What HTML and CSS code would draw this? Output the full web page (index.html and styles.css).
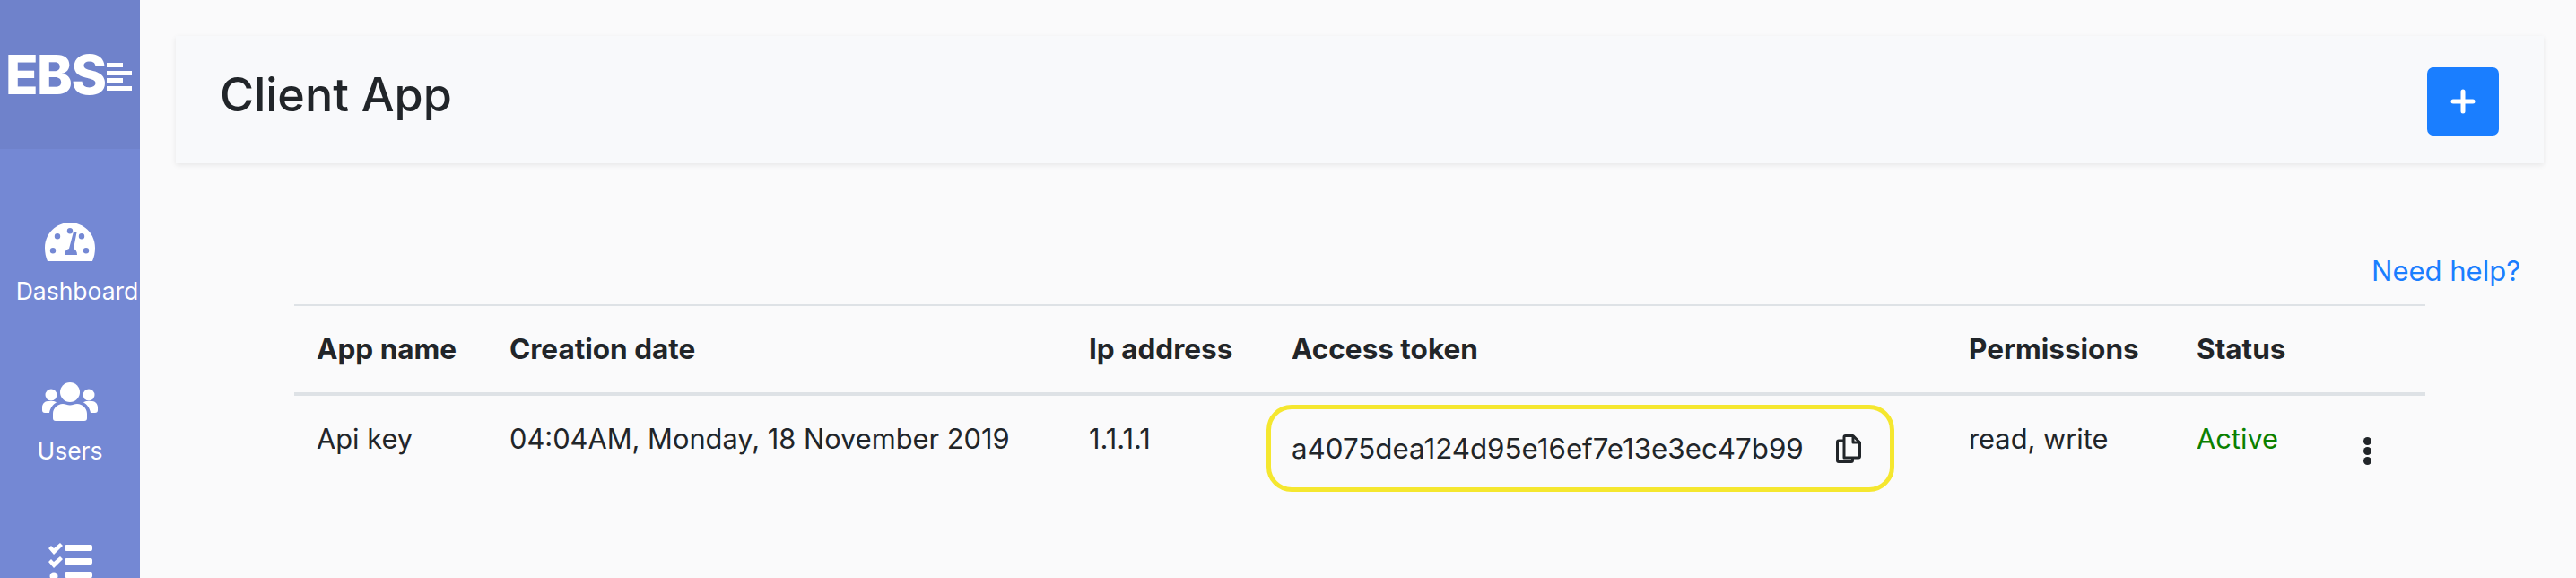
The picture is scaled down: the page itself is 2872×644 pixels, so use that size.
FILE: index.html
```html
<!DOCTYPE html>
<html lang="en">
<head>
  <meta charset="UTF-8" />
  <meta name="viewport" content="width=device-width, initial-scale=1" />
  <title>Client App</title>
  <link rel="stylesheet" href="styles.css">
</head>
<body>
  <div class="app">
    <aside class="sidebar">
      <div class="logo">
        <span class="logo-text">EBS</span>
        <span class="logo-lines"><i class="short"></i><i></i><i class="short"></i><i></i></span>
      </div>
      <nav class="nav">
        <a class="nav-item nav-dash">
          <svg class="icon-dash" viewBox="0 0 56 43">
            <path fill-rule="evenodd" fill="#fff" d="M28 0C12.5 0 0 12.5 0 28c0 5.500 1 10.500 3 15h50c2-4.500 3-9.500 3-15C56 12.500 43.500 0 28 0zM28 6a3.200 3.200 0 1 1 0 6.400 3.200 3.200 0 0 1 0-6.400zM14 12a3.200 3.200 0 1 1 0 6.400 3.200 3.200 0 0 1 0-6.400zM41 12a3.200 3.200 0 1 1 0 6.400 3.200 3.200 0 0 1 0-6.400zM9 28a3.200 3.200 0 1 1 0 6.400 3.200 3.200 0 0 1 0-6.400zM46 28a3.200 3.200 0 1 1 0 6.400 3.200 3.200 0 0 1 0-6.400zM32 10l3.500 1-3.500 18c2.500 1 4 3.500 4 7H22c0-3.500 1.500-6 5-7z"/>
          </svg>
          <span>Dashboard</span>
        </a>
        <a class="nav-item">
          <svg class="icon-users" viewBox="0 0 62 43" fill="#fff">
            <circle cx="31" cy="11" r="11"/>
            <circle cx="10" cy="14" r="6.500"/>
            <circle cx="52" cy="14" r="6.500"/>
            <path d="M15 43c-2 0-3-1-3-3v-5c0-6 5-11 11-11 3 0 5 1.500 8 1.500s5-1.500 8-1.500c6 0 11 5 11 11v5c0 2-1 3-3 3z"/>
            <path d="M3 34c-2 0-3-1-3-3v-3c0-4 3-7 6-7h6c1.500 0 3 .5 4 1.500-4 2-7 6-8 11.500zM59 34c2 0 3-1 3-3v-3c0-4-3-7-6-7h-6c-1.500 0-3 .5-4 1.500 4 2 7 6 8 11.500z"/>
          </svg>
          <span>Users</span>
        </a>
        <a class="nav-item">
          <svg class="icon-tasks" viewBox="0 0 50 50" fill="#fff">
            <path d="M1 7l3-3 3 3 7-6 3 3L7 14z"/>
            <path d="M1 22l3-3 3 3 7-6 3 3L7 29z"/>
            <circle cx="7" cy="38" r="4.500"/>
            <rect x="19" y="3" width="31" height="7" rx="2"/>
            <rect x="19" y="18" width="31" height="7" rx="2"/>
            <rect x="19" y="33" width="31" height="7" rx="2"/>
          </svg>
        </a>
      </nav>
    </aside>

    <main class="main">
      <header class="page-head">
        <h1>Client App</h1>
        <button class="add-btn" type="button">
          <svg viewBox="0 0 28 28" width="28" height="28"><path d="M14 3v22M3 14h22" stroke="#fff" stroke-width="5" stroke-linecap="round"/></svg>
        </button>
      </header>

      <div class="help"><a>Need help?</a></div>

      <table class="apps">
        <thead>
          <tr>
            <th class="col-name">App name</th>
            <th class="col-date">Creation date</th>
            <th class="col-ip">Ip address</th>
            <th class="col-token">Access token</th>
            <th class="col-perm">Permissions</th>
            <th class="col-status">Status</th>
            <th class="col-menu"></th>
          </tr>
        </thead>
        <tbody>
          <tr>
            <td>Api key</td>
            <td>04:04AM, Monday, 18 November 2019</td>
            <td>1.1.1.1</td>
            <td>
              <div class="token">
                <span>a4075dea124d95e16ef7e13e3ec47b99</span>
                <svg class="copy" viewBox="0 0 28 32" fill="none" stroke="#212529" stroke-width="3" stroke-linejoin="round">
                  <path d="M9 26V3c0-.8.6-1.500 1.500-1.500H19L26.500 9v15.500c0 .9-.7 1.500-1.500 1.500z"/>
                  <path d="M19 1.500V9h7.500"/>
                  <path d="M9 7H3c-.9 0-1.500.7-1.500 1.500V29c0 .9.6 1.500 1.500 1.500h14c.9 0 1.500-.6 1.500-1.500v-3"/>
                </svg>
              </div>
            </td>
            <td>read, write</td>
            <td class="active">Active</td>
            <td class="menu-cell"><span class="kebab"><i></i><i></i><i></i></span></td>
          </tr>
        </tbody>
      </table>
    </main>
  </div>
</body>
</html>
```

FILE: styles.css
```css
* {
  box-sizing: border-box;
}
html,
body {
  height: 100%;
}
body {
  font-family: Inter, "Liberation Sans", sans-serif;
  background: #fafafb;
  color: #212529;
  margin: 0;
  overflow: hidden;
}
.app {
  display: flex;
  height: 644px;
  overflow: hidden;
}
.sidebar {
  width: 156px;
  flex-shrink: 0;
  background: #7488d4;
  color: #fff;
}
.logo {
  height: 166px;
  background: #6f82cb;
  display: flex;
  align-items: flex-start;
  padding: 52px 0 0 6px;
}
.logo-text {
  font-size: 60px;
  font-weight: 800;
  line-height: 62px;
  letter-spacing: -1.5px;
}
.logo-lines {
  display: flex;
  flex-direction: column;
  gap: 3.500px;
  margin-top: 18px;
  margin-left: 1px;
}
.logo-lines i {
  display: block;
  width: 28px;
  height: 5px;
  background: #fff;
}
.logo-lines i.short {
  width: 18px;
}
.nav {
  display: flex;
  flex-direction: column;
  align-items: center;
  padding-top: 82px;
}
.nav-item {
  display: flex;
  flex-direction: column;
  align-items: center;
  font-size: 26.500px;
  line-height: 33px;
  white-space: nowrap;
  height: 178px;
}
.nav-item span {
  margin-top: 17px;
}
.nav-dash span {
  margin-left: 16px;
}
.icon-dash {
  width: 56px;
  height: 43px;
}
.icon-users {
  width: 62px;
  height: 43px;
}
.icon-tasks {
  width: 50px;
  height: 50px;
}
.main {
  flex: 1;
  min-width: 0;
}
.page-head {
  margin: 40px 36px 0 40px;
  height: 142px;
  background: #f8f9fb;
  box-shadow: 0 2px 6px rgba(0, 0, 0, 0.08);
  display: flex;
  align-items: center;
  justify-content: space-between;
  padding: 0 50px 0 49px;
}
.page-head h1 {
  margin: -10px 0 0;
  font-size: 52px;
  font-weight: 500;
  line-height: 60px;
}
.add-btn {
  width: 80px;
  height: 76px;
  background: #1a7eff;
  border: none;
  border-radius: 7px;
  display: flex;
  align-items: center;
  justify-content: center;
  padding: 0;
  margin-top: 4px;
}
.help {
  text-align: right;
  font-size: 31px;
  line-height: 36px;
  padding: 102px 62px 0 0;
  height: 157px;
  color: #1a7eff;
}
.apps {
  margin-left: 172px;
  width: 2376px;
  border-collapse: collapse;
  table-layout: fixed;
  font-size: 30.800px;
  line-height: 36px;
}
.apps th {
  text-align: left;
  font-size: 31.500px;
  font-weight: 700;
  padding: 0 0 0 25px;
  height: 99px;
  border-top: 2px solid #dee2e6;
  border-bottom: 4px solid #dee2e6;
}
.apps td {
  padding: 30px 0 0 25px;
  vertical-align: top;
  white-space: nowrap;
}
.col-name { width: 215px; }
.col-date { width: 646px; }
.col-ip { width: 226px; }
.col-token { width: 755px; }
.col-perm { width: 254px; }
.col-status { width: 186px; }
.col-menu { width: 94px; }
.apps td.active {
  color: #0a8000;
}
.token {
  width: 700px;
  height: 97px;
  margin: -20px 0 0 -28px;
  padding: 0 32px 0 23px;
  border: 5px solid #f5e72f;
  border-radius: 28px;
  font-size: 31.300px;
  display: flex;
  align-items: center;
  justify-content: space-between;
}
.copy {
  width: 28px;
  height: 32px;
}
.menu-cell .kebab {
  display: flex;
  flex-direction: column;
  gap: 2px;
  margin: 16px 0 0 0;
}
.kebab i {
  display: block;
  width: 9px;
  height: 9px;
  border-radius: 50%;
  background: #212529;
}
```
